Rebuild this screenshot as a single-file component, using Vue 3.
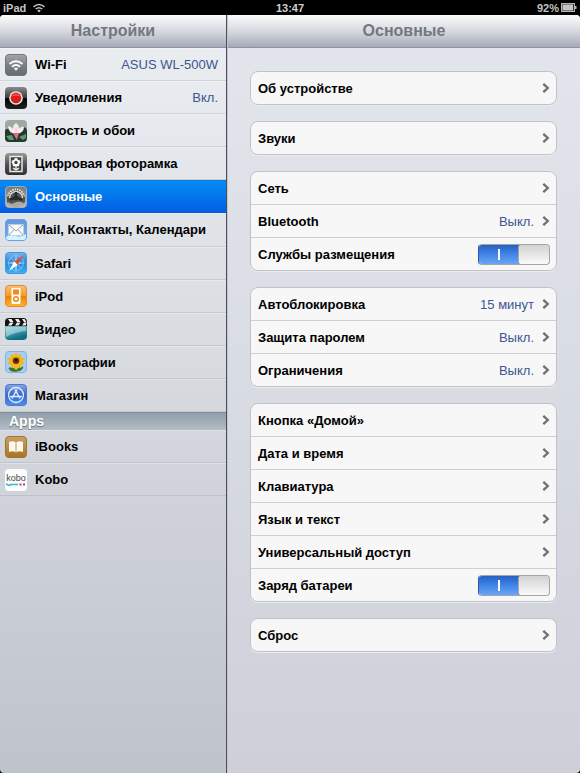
<template>
  <div class="screen">
    <header class="status">
      <div class="status-left">
        <span>iPad</span>
        <svg width="14" height="10" viewBox="0 0 14 10">
          <path d="M1.5 3.8Q7-0.8 12.5 3.8M3.7 6Q7 3.3 10.3 6" fill="none" stroke="#c4c4c4" stroke-width="1.5" />
          <path d="M5.2 7.5Q7 6.2 8.8 7.5L7 9.5Z" fill="#c4c4c4" />
        </svg>
      </div>
      <time class="clock">13:47</time>
      <div class="status-right">
        <span>92%</span>
        <svg width="16" height="9" viewBox="0 0 16 9">
          <rect x="0.5" y="0.5" width="13" height="8" fill="#333" stroke="#b5b5b5" />
          <rect x="1.5" y="1.5" width="10.500" height="6" fill="#c4c4c4" />
          <path d="M14 3h1.5v3H14z" fill="#b5b5b5" />
        </svg>
      </div>
    </header>

    <div class="panes">
      <nav class="sidebar">
        <h1 class="title">Настройки</h1>
        <ul class="menu main-menu">
          <li v-for="item in menu" :key="item.icon">
            <a href="#" class="menu-row" :class="{ active: item.icon === current }" @click.prevent="current = item.icon">
              <svg class="icon" viewBox="0 0 22 22">
                <use :href="'#i-' + item.icon" />
              </svg>
              <span class="name">{{ item.name }}</span>
              <span v-if="item.value" class="value">{{ item.value }}</span>
            </a>
          </li>
        </ul>
        <h2 class="section">Apps</h2>
        <ul class="menu">
          <li v-for="item in apps" :key="item.icon">
            <a href="#" class="menu-row" :class="{ active: item.icon === current }" @click.prevent="current = item.icon">
              <svg v-if="item.icon !== 'kobo'" class="icon" viewBox="0 0 22 22">
                <use :href="'#i-' + item.icon" />
              </svg>
              <svg v-else class="icon" viewBox="0 0 22 22">
                <rect width="22" height="22" rx="4" fill="#fdfdfd" />
                <text x="11" y="12" text-anchor="middle" class="kobo">kobo</text>
                <path d="M1 15l3 1.500 2-1h7" fill="none" stroke="#35b9d2" stroke-width="1.500" />
                <path d="M14.500 14.500h2v2h-2zM18 14.500h2v2h-2z" fill="#c52a94" />
              </svg>
              <span class="name">{{ item.name }}</span>
            </a>
          </li>
        </ul>
      </nav>

      <main class="detail">
        <h1 class="title">Основные</h1>
        <div class="groups">
          <ul v-for="(group, g) in groups" :key="g" class="group">
            <li v-for="row in group" :key="row.name">
              <label v-if="'on' in row" class="row">
                <span class="name">{{ row.name }}</span>
                <input v-model="row.on" type="checkbox" class="switch">
              </label>
              <a v-else href="#" class="row" @click.prevent>
                <span class="name">{{ row.name }}</span>
                <span v-if="row.value" class="value">{{ row.value }}</span>
                <svg class="chevron" width="8" height="10" viewBox="0 0 8 10">
                  <path d="M1.300 0.800L5.800 5L1.300 9.200" fill="none" stroke="#707070" stroke-width="2.300" />
                </svg>
              </a>
            </li>
          </ul>
        </div>
      </main>
    </div>

    <svg class="sprite" width="0" height="0" aria-hidden="true">
      <defs>
        <linearGradient id="g-gray" x2="0" y2="1">
          <stop offset="0" stop-color="#a3a7ab" />
          <stop offset="0.5" stop-color="#7c8187" />
          <stop offset="1" stop-color="#646a72" />
        </linearGradient>
        <linearGradient id="g-black" x2="0" y2="1">
          <stop offset="0" stop-color="#8c8c8c" />
          <stop offset="0.500" stop-color="#3a3a3a" />
          <stop offset="0.520" stop-color="#050505" />
          <stop offset="1" stop-color="#222" />
        </linearGradient>
        <linearGradient id="g-frame" x2="0" y2="1">
          <stop offset="0" stop-color="#999" />
          <stop offset="0.5" stop-color="#555" />
          <stop offset="1" stop-color="#303030" />
        </linearGradient>
        <linearGradient id="g-metal" x2="0" y2="1">
          <stop offset="0" stop-color="#77787a" />
          <stop offset="1" stop-color="#bcbcba" />
        </linearGradient>
        <linearGradient id="g-mail" x2="0" y2="1">
          <stop offset="0" stop-color="#6395e3" />
          <stop offset="0.700" stop-color="#69a9f2" />
          <stop offset="1" stop-color="#a6e5fd" />
        </linearGradient>
        <linearGradient id="g-safari" x2="0" y2="1">
          <stop offset="0" stop-color="#77b6ee" />
          <stop offset="0.5" stop-color="#2a84dd" />
          <stop offset="1" stop-color="#35b7f5" />
        </linearGradient>
        <linearGradient id="g-ipod" x2="0" y2="1">
          <stop offset="0" stop-color="#f9bf7b" />
          <stop offset="0.480" stop-color="#f49a2d" />
          <stop offset="0.520" stop-color="#f08205" />
          <stop offset="1" stop-color="#ffb52b" />
        </linearGradient>
        <linearGradient id="g-video" x2="0.300" y2="1">
          <stop offset="0" stop-color="#c8e6ea" />
          <stop offset="0.600" stop-color="#58aab8" />
          <stop offset="1" stop-color="#0e7086" />
        </linearGradient>
        <linearGradient id="g-store" x2="0" y2="1">
          <stop offset="0" stop-color="#8ba4e4" />
          <stop offset="0.500" stop-color="#3765cf" />
          <stop offset="1" stop-color="#4692f0" />
        </linearGradient>
        <linearGradient id="g-books" x2="0" y2="1">
          <stop offset="0" stop-color="#c9a263" />
          <stop offset="1" stop-color="#a87426" />
        </linearGradient>

        <symbol id="i-wifi" viewBox="0 0 22 22">
          <rect x="0.5" y="0.5" width="21" height="21" rx="3.500" fill="url(#g-gray)" stroke="#6f757b" />
          <path d="M4.500 10Q11 4.500 17.500 10M7 12.700Q11 9.300 15 12.700" fill="none" stroke="#fff" stroke-width="2" />
          <path d="M8.800 14.300Q11 12.500 13.200 14.300L11 16.800Z" fill="#fff" />
        </symbol>
        <symbol id="i-notice" viewBox="0 0 22 22">
          <rect width="22" height="22" rx="4" fill="url(#g-black)" />
          <circle cx="11" cy="11" r="6.800" fill="#eee" />
          <circle cx="11" cy="11" r="5.400" fill="#db1f1f" />
          <path d="M6.500 9.500a4.700 4 0 0 1 9 0Q11 8 6.500 9.500" fill="#e8544e" />
        </symbol>
        <symbol id="i-bright" viewBox="0 0 22 22">
          <rect width="22" height="22" rx="4" fill="#9bab9f" />
          <path d="M0 10Q4 7 8 10T16 9T22 10V18a4 4 0 0 1-4 4H4a4 4 0 0 1-4-4z" fill="#213c2b" />
          <path d="M1 16l6-1 2 5H4zM14 17l7-3v4l-3 2z" fill="#66907b" />
          <path d="M11 14Q3 13 3 6Q7 7 8 9Q8 5 11 3Q14 5 14 9Q16 6 19 7Q19 13 11 14" fill="#fbe9ed" />
          <path d="M11 14Q9 10 11 6Q13 10 11 14" fill="#f9cfd9" />
          <path d="M8 13h6l-1 3-1 4-2-3z" fill="#dd6b86" />
        </symbol>
        <symbol id="i-frame" viewBox="0 0 22 22">
          <rect width="22" height="22" rx="4" fill="url(#g-frame)" />
          <rect x="5" y="3.500" width="12" height="15" fill="#444" stroke="#e8e8e8" stroke-width="1.500" />
          <g fill="#fff">
            <circle cx="11" cy="7" r="1.900" /><circle cx="8.500" cy="9" r="1.900" /><circle cx="13.500" cy="9" r="1.900" />
            <circle cx="9.500" cy="11.500" r="1.900" /><circle cx="12.500" cy="11.500" r="1.900" />
          </g>
          <circle cx="11" cy="9.500" r="1.700" fill="#444" />
          <path d="M11 12v5M11 17l-3-2M11 17l3-2" stroke="#fff" stroke-width="1.200" />
        </symbol>
        <symbol id="i-general" viewBox="0 0 22 22">
          <rect x="0.500" y="0.500" width="21" height="21" rx="3.500" fill="url(#g-metal)" stroke="#a9a9a7" />
          <circle cx="11" cy="11.500" r="7.500" fill="#353638" />
          <circle cx="11" cy="11.500" r="8" fill="none" stroke="#ecebe8" stroke-width="1.800" stroke-dasharray="1.400 1" />
          <path d="M2 11Q11 3 20 11V16Q16 20 11 20T2 16z" fill="#515254" />
          <path d="M4.500 12a6.500 6.500 0 0 1 13 0" fill="none" stroke="#d6d6d4" stroke-width="1.500" />
          <path d="M11 11V6M11 11l-6 3M11 11l6 3" stroke="#242527" stroke-width="2" />
          <circle cx="11" cy="12" r="2.500" fill="#28292a" />
          <path d="M3 16q3 3 6 1t8-1l2 2q-3 3-8 3t-8-3z" fill="#a7a7a5" />
        </symbol>
        <symbol id="i-mail" viewBox="0 0 22 22">
          <rect x="0.500" y="0.500" width="21" height="21" rx="3.500" fill="url(#g-mail)" stroke="#6b9ee0" />
          <path d="M1 18Q6 15 11 17T21 15V18a3 3 0 0 1-3 3H4a3 3 0 0 1-3-3" fill="#d4f3ff" />
          <rect x="3.500" y="5.500" width="15" height="11" fill="#fafafa" stroke="#c1cbd9" stroke-width="0.600" />
          <path d="M4 6l7 6 7-6M4 16l5-5.500M18 16l-5-5.500" fill="none" stroke="#96a3b4" />
        </symbol>
        <symbol id="i-safari" viewBox="0 0 22 22">
          <rect x="0.500" y="0.500" width="21" height="21" rx="3.500" fill="url(#g-safari)" stroke="#4b91d5" />
          <circle cx="11" cy="11" r="7.500" fill="none" stroke="#79bdf0" />
          <path d="M11 1l1.300 8.700L21 11l-8.700 1.300L11 21l-1.300-8.700L1 11l8.700-1.300z" fill="#9bd2f6" />
          <path d="M5 5l12 12" stroke="#7abdf0" />
          <path d="M4 19L9.300 9.300l3.400 3.400z" fill="#fff" />
          <path d="M19 3L9.300 9.300l3.400 3.400z" fill="#dc5138" />
        </symbol>
        <symbol id="i-ipod" viewBox="0 0 22 22">
          <rect x="0.500" y="0.500" width="21" height="21" rx="3.500" fill="url(#g-ipod)" stroke="#e98a22" />
          <rect x="6.500" y="3" width="9" height="16" rx="1" fill="#fff" />
          <rect x="8" y="4.500" width="6" height="5" fill="#ef8b18" />
          <circle cx="11" cy="14" r="2.300" fill="none" stroke="#ef8b18" stroke-width="1.600" />
        </symbol>
        <symbol id="i-video" viewBox="0 0 22 22">
          <rect width="22" height="22" rx="4" fill="url(#g-video)" />
          <path d="M0 8V4a4 4 0 0 1 4-4H18a4 4 0 0 1 4 4V8z" fill="#141414" />
          <path d="M3 1h3.500l2 3h-3.500zM10 1h3.500l2 3H12zM17 1h2.500l2 3H19zM5 4.500h3.500l-2 3H3zM12 4.500h3.500l-2 3H10zM19 4.500h2.500v1l-1 2H17z" fill="#eee" />
          <path d="M1 9h20v4Q10 14 1 19z" fill="#e7f8fa" opacity="0.450" />
        </symbol>
        <symbol id="i-photos" viewBox="0 0 22 22">
          <rect x="0.500" y="0.500" width="21" height="21" rx="3.500" fill="#a3d0f6" stroke="#7eb4e6" />
          <path d="M11 13v8M11 20q-6 1-7-3 5-1 7 3M11 20q6 0 7-4-5 0-7 4" fill="#38761f" stroke="#38761f" />
          <path d="M11 1l2 3.300 3.500-1.500-.3 3.700 3.800.8-2.500 2.700 2.500 3-3.800.5.200 3.800-3.400-1.600-2 3.300-2-3.300-3.400 1.600.2-3.800L2 13l2.500-3L2 7.300l3.800-.8-.3-3.700L9 4.300z" fill="#f7b51c" />
          <circle cx="11" cy="9.800" r="3.300" fill="#6b360f" />
          <circle cx="11" cy="9.300" r="1.600" fill="#33170a" />
        </symbol>
        <symbol id="i-store" viewBox="0 0 22 22">
          <rect x="0.500" y="0.500" width="21" height="21" rx="3.500" fill="url(#g-store)" stroke="#4d78d2" />
          <circle cx="11" cy="11" r="7.500" fill="none" stroke="#e3edfb" stroke-width="1.300" />
          <path d="M12 5.500L7 14.500M10 5.500l5 9M5 12.500h12" fill="none" stroke="#e3edfb" stroke-width="1.500" />
        </symbol>
        <symbol id="i-books" viewBox="0 0 22 22">
          <rect x="0.500" y="0.500" width="21" height="21" rx="3.500" fill="url(#g-books)" stroke="#a0742f" />
          <path d="M4 6Q8 4.500 11 6.500Q14 4.500 18 6V16Q14 14.500 11 16.500Q8 14.500 4 16z" fill="#fffaf0" />
          <path d="M11 6.500v9.500" stroke="#c39a58" />
        </symbol>
      </defs>
    </svg>
  </div>
</template>

<script setup>
import { ref } from 'vue';

const current = ref('general');

const menu = [
  { icon: 'wifi', name: 'Wi-Fi', value: 'ASUS WL-500W' },
  { icon: 'notice', name: 'Уведомления', value: 'Вкл.' },
  { icon: 'bright', name: 'Яркость и обои' },
  { icon: 'frame', name: 'Цифровая фоторамка' },
  { icon: 'general', name: 'Основные' },
  { icon: 'mail', name: 'Mail, Контакты, Календари' },
  { icon: 'safari', name: 'Safari' },
  { icon: 'ipod', name: 'iPod' },
  { icon: 'video', name: 'Видео' },
  { icon: 'photos', name: 'Фотографии' },
  { icon: 'store', name: 'Магазин' },
];

const apps = [
  { icon: 'books', name: 'iBooks' },
  { icon: 'kobo', name: 'Kobo' },
];

const groups = ref([
  [{ name: 'Об устройстве' }],
  [{ name: 'Звуки' }],
  [
    { name: 'Сеть' },
    { name: 'Bluetooth', value: 'Выкл.' },
    { name: 'Службы размещения', on: true },
  ],
  [
    { name: 'Автоблокировка', value: '15 минут' },
    { name: 'Защита паролем', value: 'Выкл.' },
    { name: 'Ограничения', value: 'Выкл.' },
  ],
  [
    { name: 'Кнопка «Домой»' },
    { name: 'Дата и время' },
    { name: 'Клавиатура' },
    { name: 'Язык и текст' },
    { name: 'Универсальный доступ' },
    { name: 'Заряд батареи', on: true },
  ],
  [{ name: 'Сброс' }],
]);
</script>

<style>
body {
  margin: 0;
  background: #000;
}
</style>

<style scoped>
.screen {
  display: flex;
  flex-direction: column;
  min-height: 100vh;
  background: #000;
  font-family: "Liberation Sans", Arial, sans-serif;
  font-size: 13px;
  color: #000;
}

ul {
  list-style: none;
  margin: 0;
  padding: 0;
}

a {
  color: inherit;
  text-decoration: none;
}

.status {
  display: grid;
  grid-template-columns: 1fr auto 1fr;
  align-items: center;
  height: 15px;
  padding: 0 3px;
  color: #c4c4c4;
  font-size: 11px;
  font-weight: bold;
}

.status-left,
.status-right {
  display: flex;
  align-items: center;
  gap: 6px;
}

.status-right {
  justify-content: flex-end;
  gap: 2px;
}

.clock {
  color: #d0d0d0;
}

.panes {
  flex: 1;
  display: flex;
}

.sidebar {
  flex: 0 0 226px;
  border-right: 1px solid #4c4f56;
  border-radius: 4px 0 0 4px;
  background: linear-gradient(#eceff2, #bfc3cb);
  overflow: hidden;
}

.detail {
  flex: 1;
  min-width: 0;
  border-left: 1px solid #c3c6cc;
  border-radius: 0 4px 4px 0;
  background: linear-gradient(#e3e7ed, #cdd0d8);
  overflow: hidden;
}

.title {
  height: 32px;
  margin: 0;
  border-bottom: 1px solid #8e92a2;
  background: linear-gradient(#fcfcfd, #d3d5dc 55%, #a6a9b8);
  color: #73777f;
  font-size: 16px;
  line-height: 32px;
  text-align: center;
}

.main-menu {
  display: grid;
  grid-auto-rows: 1fr;
  min-height: 364px;
}

.menu-row {
  display: flex;
  align-items: center;
  gap: 8px;
  box-sizing: border-box;
  height: 100%;
  min-height: 33px;
  padding: 0 8px 0 5px;
  border-top: 1px solid rgba(255, 255, 255, 0.3);
  border-bottom: 1px solid rgba(120, 125, 140, 0.2);
}

.menu-row.active {
  border-top-color: #0579e2;
  border-bottom-color: #0458dc;
  background: linear-gradient(#058cf3, #015fe6);
  color: #fff;
}

.icon {
  flex: none;
  width: 22px;
  height: 22px;
}

.kobo {
  font-size: 9px;
  fill: #444;
}

.name {
  flex: 1;
  font-weight: bold;
  white-space: nowrap;
}

.value {
  color: #3b5690;
  white-space: nowrap;
}

.active .value {
  color: #fff;
}

.section {
  height: 17px;
  margin: 0;
  padding-left: 9px;
  border-top: 1px solid #82909b;
  background: linear-gradient(#8f9ea9, #b3bdc6);
  color: #fff;
  font-size: 14px;
  line-height: 17px;
  text-shadow: 0 1px 1px #66717a;
}

.groups {
  display: flex;
  flex-direction: column;
  gap: 16px;
  padding: 23px 23px 23px 22px;
}

.group {
  border: 1px solid #bfc2c8;
  border-radius: 8px;
  background: #f7f7f7;
  box-shadow: 0 1px 0 #e9ebef;
}

.group li + li {
  border-top: 1px solid #cfcfd1;
}

.row {
  display: flex;
  align-items: center;
  gap: 8px;
  height: 32px;
  padding: 0 6px 0 7px;
}

.switch {
  appearance: none;
  display: flex;
  width: 72px;
  height: 21px;
  margin: 0;
  border: 1px solid #a5a5a5;
  border-radius: 4px;
  background: #f4f4f4;
  overflow: hidden;
}

.switch::before {
  content: '';
  width: 40px;
}

.switch::after {
  content: '';
  width: 30px;
  border-radius: 3px;
  background: linear-gradient(#d2d2d2, #fafafa);
  box-shadow: 0 0 0 1px #a5a5a5;
}

.switch:checked {
  border-left-color: #2c5aa8;
}

.switch:not(:checked) {
  flex-direction: row-reverse;
}

.switch:checked::before {
  background:
    linear-gradient(#fff, #fff) center / 2px 11px no-repeat,
    linear-gradient(#2560c2, #4285e8 50%, #68a5f5);
}
</style>
